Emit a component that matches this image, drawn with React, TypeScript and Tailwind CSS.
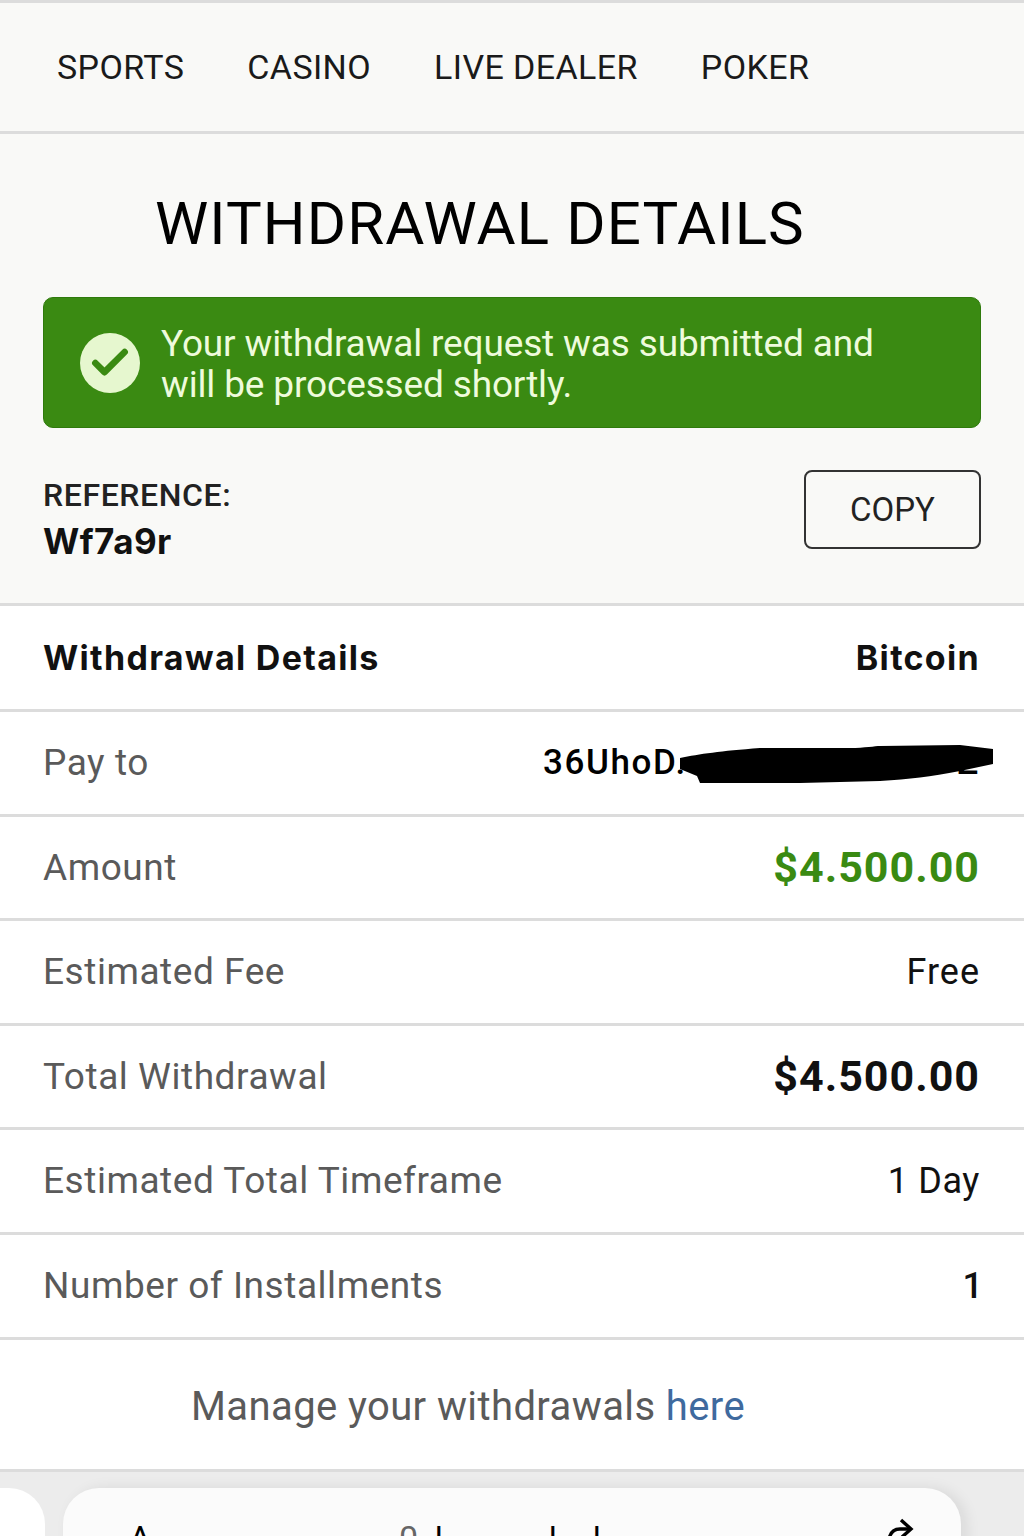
import { Check } from "lucide-react";

const rows = [
  { label: "Pay to", value: "36UhoD.", cls: "text-[35px] font-medium text-black tracking-[1.6px]" },
  { label: "Amount", value: "$4.500.00", cls: "text-[43px] font-bold text-[#3a8a12] tracking-[1px]" },
  { label: "Estimated Fee", value: "Free", cls: "text-[36px] text-[#111] tracking-[1px]" },
  { label: "Total Withdrawal", value: "$4.500.00", cls: "text-[43px] font-bold text-[#111] tracking-[1px]" },
  { label: "Estimated Total Timeframe", value: "1 Day", cls: "text-[36px] text-[#111] tracking-[0.6px]" },
  { label: "Number of Installments", value: "1", cls: "text-[36px] font-medium text-[#111] -mr-[3px]" },
];

export default function App() {
  return (
    <div className="w-[1024px] h-[1536px] overflow-hidden bg-white font-['Roboto',sans-serif] text-[#111]">
      {/* Nav */}
      <nav className="h-[134px] bg-[#f9f9f7] border-y-[3px] border-[#dcdcdc] flex items-center pl-[57px] gap-[63px] text-[34px] text-[#1a1a1a] tracking-[0.4px]">
        <span>SPORTS</span>
        <span>CASINO</span>
        <span>LIVE DEALER</span>
        <span>POKER</span>
      </nav>

      {/* Header */}
      <section className="h-[472px] bg-[#f9f9f7] border-b-[3px] border-[#dcdcdc] px-[43px]">
        <h1 className="h-[163px] pt-[52px] pl-[112px] text-[60px] leading-[76px] font-normal text-black tracking-[1.1px]">WITHDRAWAL DETAILS</h1>
        <div className="h-[131px] bg-[#3a8a12] rounded-[10px] border border-[#2f7a0c] flex items-center pl-[36px] gap-[21px]">
          <div className="w-[60px] h-[60px] rounded-full bg-[#e6f7cf] flex items-center justify-center shrink-0">
            <Check size={44} strokeWidth={3.6} className="text-[#3a8a12]" />
          </div>
          <p className="pt-[3px] text-[37px] leading-[41px] text-[#eefbdc] tracking-[-0.15px]">
            Your withdrawal request was submitted and<br />will be processed shortly.
          </p>
        </div>
        <div className="flex justify-between mt-[42px]">
          <div className="pt-[7px]">
            <div className="text-[32px] leading-[36px] font-medium text-[#222] tracking-[0.6px]">REFERENCE:</div>
            <div className="mt-[5px] font-['Inter',sans-serif] text-[35px] leading-[46px] font-bold text-[#111] tracking-[0.4px]">Wf7a9r</div>
          </div>
          <button className="w-[177px] h-[79px] border-2 border-[#333] rounded-[8px] text-[33px] text-[#222]">COPY</button>
        </div>
      </section>

      {/* Details table */}
      <div className="h-[106px] flex items-center justify-between pl-[43px] pr-[44px] border-b-[3px] border-[#dcdcdc] font-['Inter',sans-serif] text-[34px] font-bold tracking-[1.3px]">
        <span>Withdrawal Details</span>
        <span>Bitcoin</span>
      </div>
      {rows.map((r) => (
        <div key={r.label} className="relative h-[104.6px] flex items-center justify-between pl-[43px] pr-[44px] border-b-[3px] border-[#dcdcdc]">
          <span className="text-[37px] text-[#5a5a5a] tracking-[0.55px]">{r.label}</span>
          {r.label === "Pay to" ? (
            <>
              <span className={`${r.cls} absolute left-[543px]`}>{r.value}</span>
              <span className={r.cls}>Z</span>
              <svg className="absolute left-[670px] top-[27px]" width="330" height="60" viewBox="0 0 330 60">
                <path d="M10 19 C30 15 50 12 90 9 L180 9 C195 9 205 7 210 7 L290 6 L323 10 L323 25 L290 32 C260 38 240 40 210 42 L130 44 L30 44 L27 37 L10 30 Z" fill="#000" />
              </svg>
            </>
          ) : (
            <span className={r.cls}>{r.value}</span>
          )}
        </div>
      ))}

      {/* Manage link */}
      <div className="h-[132px] border-b-[3px] border-[#dcdcdc] flex items-center pl-[191px] pt-[6px] text-[40px] text-[#5a5a5a] tracking-[0.4px]">
        <span>Manage your withdrawals <span className="text-[#3f6a9e]">here</span></span>
      </div>

      {/* Browser tabs */}
      <div className="h-[70px] bg-[#ececec] flex gap-[18px] pt-[16px] overflow-hidden">
        <div className="w-[45px] h-[120px] bg-white rounded-tr-[36px] shrink-0" />
        <div className="relative w-[898px] h-[120px] bg-[#fbfbfb] rounded-t-[36px] shadow-[6px_0_14px_rgba(0,0,0,0.08)] shrink-0 text-[34px] leading-[40px] text-black">
          <span className="absolute left-[66px] top-[30px]">A</span>
          <span className="absolute left-[336px] top-[30px] text-[#666]">0</span>
          <span className="absolute left-[372px] top-[30px] font-['Liberation_Sans',sans-serif]">l</span>
          <span className="absolute left-[486px] top-[30px] font-['Liberation_Sans',sans-serif]">l</span>
          <span className="absolute left-[530px] top-[30px] font-['Liberation_Sans',sans-serif]">l</span>
          <svg className="absolute left-[820px] top-[28px]" width="36" height="30" viewBox="0 0 36 30" fill="none" stroke="#000" strokeWidth="3.4">
            <path d="M18 4 L28 13 L19 21" />
            <path d="M28 13 H17 C10 13 7 18 6 23" />
          </svg>
        </div>
      </div>
    </div>
  );
}
